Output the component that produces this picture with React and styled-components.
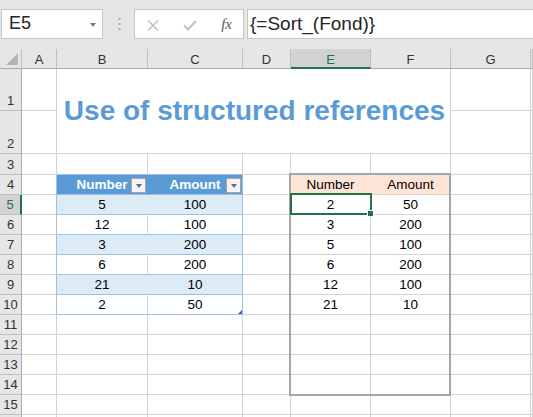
import React from 'react';
import styled, { createGlobalStyle } from 'styled-components';

const GlobalStyle = createGlobalStyle`
  html, body { margin: 0; padding: 0; background: #fff; overflow: hidden; }
  * { box-sizing: border-box; }
`;

const GRID = '#d4d4d4';
const HEAD_LINE = '#bfbfbf';
const GREEN = '#217346';
const T_BLUE = '#5b9bd5';
const T_BAND = '#ddebf7';
const T_LINE = '#9bc2e6';
const PEACH = '#fce4d6';

const Page = styled.div`
  width: 533px;
  height: 417px;
  overflow: hidden;
  display: flex;
  flex-direction: column;
  font-family: "Liberation Sans", Arial, sans-serif;
  background: #fff;
`;

const Toolbar = styled.div`
  height: 49px;
  flex: none;
  background: #e6e6e6;
  display: flex;
  align-items: flex-start;
  padding: 9px 0 0 1px;
`;

const NameBox = styled.div`
  width: 102px;
  height: 30px;
  flex: none;
  background: #fff;
  border: 1px solid #c6c6c6;
  display: flex;
  align-items: center;
  justify-content: space-between;
  padding: 0 6px 1px 7px;
  font-size: 18px;
  color: #262626;
`;

const Caret = styled.span`
  width: 0;
  height: 0;
  border-left: 3.5px solid transparent;
  border-right: 3.5px solid transparent;
  border-top: 4px solid #777;
  margin-top: 2px;
`;

const Grip = styled.div`
  width: 4px;
  height: 30px;
  margin: 0 13px 0 14px;
  display: flex;
  align-items: center;
  justify-content: center;
`;

const FxBox = styled.div`
  width: 110px;
  height: 30px;
  flex: none;
  background: #fff;
  border: 1px solid #c6c6c6;
  display: flex;
  align-items: center;
  justify-content: space-between;
  padding: 2px 11px 0 12px;
`;

const FxLabel = styled.span`
  font-family: "Liberation Serif", "Times New Roman", serif;
  font-style: italic;
  font-size: 15px;
  color: #595959;
  margin-top: -2px;
`;

const FormulaInput = styled.div`
  flex: 1;
  height: 30px;
  margin-left: 3px;
  margin-right: -4px;
  background: #fff;
  border: 1px solid #c6c6c6;
  display: flex;
  align-items: center;
  padding: 0 0 1px 2px;
  font-size: 19px;
  color: #262626;
  white-space: nowrap;
`;

const Sheet = styled.div`
  flex: none;
  display: grid;
  grid-template-columns: 22px 35px 91px 95px 48px 80px 80px 80px 1fr;
  grid-template-rows: 20px 42px 43px 21px repeat(13, 20px);
  background: #fff;
`;

const Corner = styled.div`
  grid-column: 1;
  grid-row: 1;
  background: #e6e6e6;
  border-right: 1px solid ${HEAD_LINE};
  border-bottom: 1px solid #ababab;
  display: flex;
  align-items: flex-end;
  justify-content: flex-end;
  padding: 0 3px 3px 0;
`;

const ColHead = styled.div`
  grid-column: ${p => p.$c};
  grid-row: 1;
  background: ${p => (p.$active ? '#d2d2d2' : '#e6e6e6')};
  border-right: 1px solid ${HEAD_LINE};
  border-bottom: ${p => (p.$active ? `2px solid ${GREEN}` : '1px solid #ababab')};
  display: flex;
  align-items: center;
  justify-content: center;
  padding-top: ${p => (p.$active ? '2px' : '1px')};
  font-size: 13px;
  color: ${p => (p.$active ? GREEN : '#333')};
`;

const RowHead = styled.div`
  grid-column: 1;
  grid-row: ${p => p.$r};
  background: ${p => (p.$active ? '#d2d2d2' : '#e6e6e6')};
  border-right: ${p => (p.$active ? `2px solid ${GREEN}` : '1px solid #ababab')};
  border-bottom: 1px solid ${HEAD_LINE};
  display: flex;
  align-items: flex-end;
  justify-content: center;
  padding: 0 0 2px 0;
  font-size: 13px;
  line-height: 15px;
  color: ${p => (p.$active ? GREEN : '#333')};
`;

const Cell = styled.div`
  grid-column: ${p => p.$c};
  grid-row: ${p => p.$r};
  position: relative;
  background: ${p => p.$fill || '#fff'};
  border-right: 1px solid ${p => p.$rc || GRID};
  border-bottom: 1px solid ${p => p.$bc || GRID};
  display: flex;
  align-items: flex-end;
  justify-content: center;
  padding-bottom: 2px;
  font-size: 13.5px;
  line-height: 15px;
  color: ${p => p.$color || '#000'};
  font-weight: ${p => (p.$bold ? 700 : 400)};
  white-space: nowrap;
`;

const Title = styled.div`
  grid-column: 3 / 8;
  grid-row: 2 / 4;
  border-right: 1px solid ${GRID};
  border-bottom: 1px solid ${GRID};
  display: flex;
  align-items: center;
  justify-content: center;
  padding: 0 0 1px 2px;
  font-size: 28px;
  font-weight: 700;
  color: ${T_BLUE};
  white-space: nowrap;
`;

const FilterButton = styled.span`
  position: absolute;
  right: 1px;
  top: 3px;
  width: 15px;
  height: 15px;
  background: #f4f4f4;
  border: 1px solid #a6a6a6;
  display: flex;
  align-items: center;
  justify-content: center;
  &::after {
    content: '';
    width: 0;
    height: 0;
    border-left: 3.5px solid transparent;
    border-right: 3.5px solid transparent;
    border-top: 4px solid #6a6a6a;
  }
`;

const TableHandle = styled.span`
  position: absolute;
  right: 0;
  bottom: 0;
  width: 4px;
  height: 4px;
  background: #3b5fb0;
  clip-path: polygon(100% 0, 100% 100%, 0 100%);
`;

const RangeBorder = styled.div`
  grid-column: 6 / 8;
  grid-row: 5 / 16;
  margin: -2px 0 -1px -2px;
  border: 2px solid #a6a6a6;
  pointer-events: none;
  z-index: 2;
`;

const Selection = styled.div`
  grid-column: 6;
  grid-row: 6;
  margin: -2px -1px 0 -1px;
  border: 2px solid ${GREEN};
  position: relative;
  pointer-events: none;
  z-index: 3;
`;

const FillHandle = styled.span`
  position: absolute;
  right: -4px;
  bottom: -4px;
  width: 7px;
  height: 7px;
  background: ${GREEN};
  border: 1px solid #fff;
`;

const LETTERS = ['A', 'B', 'C', 'D', 'E', 'F', 'G', ''];
const LEFT = [[5, 100], [12, 100], [3, 200], [6, 200], [21, 10], [2, 50]];
const RIGHT = [[2, 50], [3, 200], [5, 100], [6, 200], [12, 100], [21, 10]];

// column index: 0=A .. 7=H; grid column = idx + 2
function cellSpec(row, col) {
  const spec = { text: '' };
  // Left table B4:C10 (col 1,2)
  if (col === 0 && row >= 4 && row <= 10) spec.rc = T_LINE;
  if ((col === 1 || col === 2) && row === 3) spec.bc = T_LINE;
  if (col === 1 || col === 2) {
    if (row === 4) {
      spec.fill = T_BLUE;
      spec.color = '#fff';
      spec.bold = true;
      spec.text = col === 1 ? 'Number' : 'Amount';
      spec.rc = col === 1 ? T_BLUE : T_LINE;
      spec.bc = T_LINE;
      spec.filter = true;
    } else if (row >= 5 && row <= 10) {
      const banded = (row - 5) % 2 === 0;
      spec.fill = banded ? T_BAND : '#fff';
      spec.rc = col === 2 ? T_LINE : banded ? T_BAND : GRID;
      spec.bc = T_LINE;
      spec.text = String(LEFT[row - 5][col - 1]);
      if (col === 2 && row === 10) spec.handle = true;
    }
  }
  // Right table E4:F10 (col 4,5)
  if (col === 4 || col === 5) {
    if (row === 4) {
      spec.fill = PEACH;
      spec.text = col === 4 ? 'Number' : 'Amount';
      if (col === 4) spec.rc = PEACH;
    } else if (row >= 5 && row <= 10) {
      spec.text = String(RIGHT[row - 5][col - 4]);
    }
  }
  return spec;
}

function Cells() {
  const out = [];
  for (let row = 1; row <= 16; row++) {
    for (let col = 0; col < 8; col++) {
      if ((row === 1 || row === 2) && col >= 1 && col <= 5) continue;
      const s = cellSpec(row, col);
      out.push(
        <Cell
          key={`${row}-${col}`}
          $r={row + 1}
          $c={col + 2}
          $fill={s.fill}
          $rc={s.rc}
          $bc={s.bc}
          $color={s.color}
          $bold={s.bold}
        >
          {s.text}
          {s.filter && <FilterButton />}
          {s.handle && <TableHandle />}
        </Cell>
      );
    }
  }
  return out;
}

export default function App() {
  return (
    <Page>
      <GlobalStyle />
      <Toolbar>
        <NameBox>
          <span>E5</span>
          <Caret />
        </NameBox>
        <Grip>
          <svg width="3" height="12" viewBox="0 0 3 12">
            <rect x="0.5" y="0" width="2" height="2" fill="#aaa" />
            <rect x="0.5" y="5" width="2" height="2" fill="#aaa" />
            <rect x="0.5" y="10" width="2" height="2" fill="#aaa" />
          </svg>
        </Grip>
        <FxBox>
          <svg width="12" height="11" viewBox="0 0 12 11">
            <path d="M1 0.5 L11 10.5 M11 0.5 L1 10.5" stroke="#c2c2c2" strokeWidth="1.6" fill="none" />
          </svg>
          <svg width="14" height="11" viewBox="0 0 14 11">
            <path d="M1 5.5 L5 9.5 L13 1" stroke="#c2c2c2" strokeWidth="2" fill="none" />
          </svg>
          <FxLabel>fx</FxLabel>
        </FxBox>
        <FormulaInput>{'{=Sort_(Fond)}'}</FormulaInput>
      </Toolbar>
      <Sheet>
        <Corner>
          <svg width="12" height="12" viewBox="0 0 12 12">
            <polygon points="12,0 12,12 0,12" fill="#b5b5b5" />
          </svg>
        </Corner>
        {LETTERS.map((l, i) => (
          <ColHead key={i} $c={i + 2} $active={l === 'E'}>{l}</ColHead>
        ))}
        {Array.from({ length: 16 }, (_, i) => (
          <RowHead key={i} $r={i + 2} $active={i + 1 === 5}>{i + 1 <= 15 ? i + 1 : ''}</RowHead>
        ))}
        <Cells />
        <Title>Use of structured references</Title>
        <RangeBorder />
        <Selection>
          <FillHandle />
        </Selection>
      </Sheet>
    </Page>
  );
}
